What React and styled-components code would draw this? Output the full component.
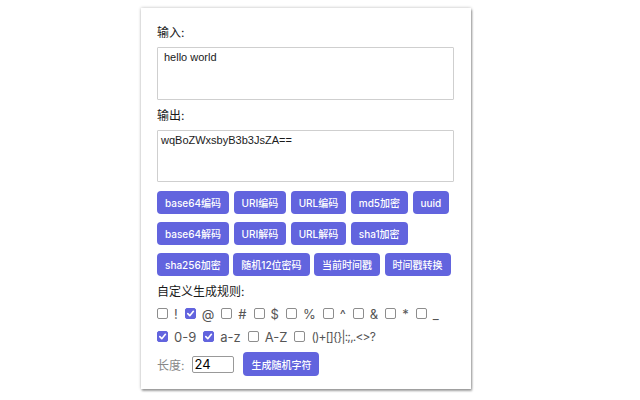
import React from 'react';
import styled, { createGlobalStyle } from 'styled-components';

const GlobalStyle = createGlobalStyle`
  html, body {
    margin: 0;
    padding: 0;
    background: #fff;
    font-family: Inter, 'Noto Sans CJK SC', sans-serif;
  }
`;

const encodeButtons = [
  ['base64编码', 'URI编码', 'URL编码', 'md5加密', 'uuid'],
  ['base64解码', 'URI解码', 'URL解码', 'sha1加密'],
  ['sha256加密', '随机12位密码', '当前时间戳', '时间戳转换'],
];

const symbolRow = [
  ['!', false],
  ['@', true],
  ['#', false],
  ['$', false],
  ['%', false],
  ['^', false],
  ['&', false],
  ['*', false],
  ['_', false],
];

const charsetRow = [
  ['0-9', true],
  ['a-z', true],
  ['A-Z', false],
  ['()+[]{}|:;,.<>?', false, true],
];

const Check = ({ label, checked, tight }) => (
  <Option $tight={tight}>
    <Box $checked={checked}>
      {checked && (
        <svg width='9' height='9' viewBox='0 0 10 10'>
          <path d='M2 5.2 L4.2 7.4 L8.2 2.6' fill='none' stroke='#fff' strokeWidth='1.8' strokeLinecap='round' strokeLinejoin='round' />
        </svg>
      )}
    </Box>
    <span className='text'>{label}</span>
  </Option>
);

const App = () => {
  return (
    <>
      <GlobalStyle />
      <Page>
        <Card>
          <Label>输入:</Label>
          <TextArea $pl='6px' defaultValue='hello world' />
          <Label $mt='7px'>输出:</Label>
          <TextArea $pl='3px' $h='52px' defaultValue='wqBoZWxsbyB3b3JsZA==' />
          <Buttons>
            {encodeButtons.map((row, i) => (
              <ButtonRow key={i}>
                {row.map((name) => (
                  <Button key={name}>{name}</Button>
                ))}
              </ButtonRow>
            ))}
          </Buttons>
          <Label $mt='7px'>自定义生成规则:</Label>
          <CheckRow $first>
            {symbolRow.map(([label, checked]) => (
              <Check key={label} label={label} checked={checked} />
            ))}
          </CheckRow>
          <CheckRow>
            {charsetRow.map(([label, checked, tight]) => (
              <Check key={label} label={label} checked={checked} tight={tight} />
            ))}
          </CheckRow>
          <LengthRow>
            <span className='name'>长度:</span>
            <LengthInput defaultValue='24' />
            <Button $big>生成随机字符</Button>
          </LengthRow>
        </Card>
      </Page>
    </>
  );
};

const Page = styled.div`
  height: 400px;
  overflow: hidden;
  padding: 8px 0 0 141px;
  box-sizing: border-box;
`;

const Card = styled.div`
  box-sizing: border-box;
  display: flex;
  flex-direction: column;
  align-items: flex-start;
  width: 330px;
  height: 381px;
  padding: 16px 16px 13px;
  background: #fff;
  box-shadow: 0 0 3px rgba(0, 0, 0, 0.28), 1px 2px 2px rgba(0, 0, 0, 0.32);
`;

const Label = styled.div`
  margin-top: ${({ $mt }) => $mt || '0'};
  height: 18px;
  font-size: 12px;
  line-height: 18px;
  color: #1a1a1a;
`;

const TextArea = styled.textarea`
  display: block;
  flex: none;
  box-sizing: border-box;
  width: 297px;
  height: ${({ $h }) => $h || '53px'};
  margin: 5px 0 0;
  padding: 2px ${({ $pl }) => $pl};
  border: 1px solid #cfcfcf;
  border-radius: 1px;
  resize: none;
  outline: none;
  font-family: 'Liberation Sans', Arial, sans-serif;
  font-size: 11px;
  line-height: 14px;
  color: #1a1a1a;
`;

const Buttons = styled.div`
  display: flex;
  flex-direction: column;
  gap: 8px;
  margin-top: 9px;
`;

const ButtonRow = styled.div`
  display: flex;
  gap: 4.5px;
`;

const Button = styled.button`
  box-sizing: border-box;
  height: ${({ $big }) => ($big ? '24px' : '23px')};
  margin: 0;
  padding: 0 8px;
  border: none;
  border-radius: 4px;
  background: #6264de;
  color: #fff;
  font-family: Inter, 'Noto Sans CJK SC', sans-serif;
  font-size: 10px;
  font-weight: 500;
  white-space: nowrap;
  cursor: pointer;
`;

const CheckRow = styled.div`
  display: flex;
  align-items: center;
  height: 23px;
  margin-top: ${({ $first }) => ($first ? '1px' : '0')};
`;

const Option = styled.label`
  display: flex;
  align-items: center;
  font-size: ${({ $tight }) => ($tight ? '12px' : '13px')};
  letter-spacing: ${({ $tight }) => ($tight ? '-0.8px' : 'normal')};
  color: #555;
  .text {
    margin-left: 6px;
    margin-right: 7px;
  }
`;

const Box = styled.span`
  box-sizing: border-box;
  display: flex;
  align-items: center;
  justify-content: center;
  width: 11px;
  height: 11px;
  border-radius: 2px;
  border: 1px solid ${({ $checked }) => ($checked ? '#6264de' : '#8d8d8d')};
  background: ${({ $checked }) => ($checked ? '#6264de' : '#fff')};
`;

const LengthRow = styled.div`
  display: flex;
  align-items: center;
  height: 24px;
  margin-top: 4px;
  .name {
    font-size: 12px;
    color: #888;
    margin-right: 8px;
  }
  button {
    margin-left: 9px;
  }
`;

const LengthInput = styled.input`
  box-sizing: border-box;
  width: 42px;
  height: 17px;
  margin: 0;
  padding: 0 1px;
  border: 1px solid #999;
  border-radius: 2px;
  font-family: Inter, sans-serif;
  font-size: 13px;
  color: #000;
  outline: none;
`;

export default App;
